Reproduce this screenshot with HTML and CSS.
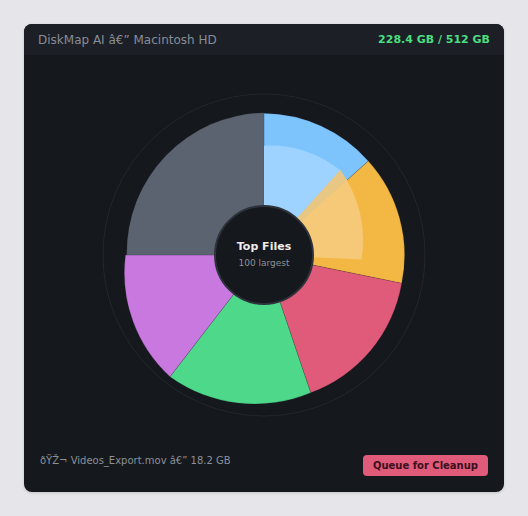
FILE: index.html
```html
<!DOCTYPE html>
<html>
<head>
<meta charset="utf-8">
<title>DiskMap AI</title>
<link rel="stylesheet" href="styles.css">
</head>
<body>
<div class="card">
  <header class="header">
    <span class="title">DiskMap AI â€” Macintosh HD</span>
    <span class="usage">228.4 GB / 512 GB</span>
  </header>
  <section class="chart">
    <svg class="sunburst" width="480" height="399" viewBox="24 55 480 399" xmlns="http://www.w3.org/2000/svg">
      <defs>
        <clipPath id="blueClip">
          <path d="M264,255 L264,113.3 A141 141 0 0 1 368.3,161 Z"/>
        </clipPath>
      </defs>
      <circle cx="264" cy="255" r="161" fill="none" stroke="#23272e" stroke-width="1"/>
      <g class="wedges">
        <path class="w-blue" d="M264,255 L264,113.3 A141 141 0 0 1 368.3,161 Z"/>
        <path class="w-yellow" d="M264,255 L368.3,161 A140 140 0 0 1 401.7,283.3 Z"/>
        <path class="w-red" d="M264,255 L401.7,283.3 A142 142 0 0 1 310.7,392.7 Z"/>
        <path class="w-green" d="M264,255 L310.7,392.7 A145 145 0 0 1 170,376.7 Z"/>
        <path class="w-purple" d="M264,255 L170,376.7 A141 141 0 0 1 125.5,255 Z"/>
        <path class="w-gray" d="M264,255 L126.7,255 A140 140 0 0 1 264,112.7 Z"/>
      </g>
      <path class="w-lblue" d="M264,255 L264,145.7 A112 112 0 0 1 340.3,170.3 Z"/>
      <path class="w-lyellow" d="M264,255 L340.3,170.3 A118 118 0 0 1 361.5,259.5 Z"/>
      <path class="w-tan" clip-path="url(#blueClip)" d="M264,255 L340.3,170.3 A118 118 0 0 1 361.5,259.5 Z"/>
      <circle class="hub" cx="264" cy="255" r="49"/>
      <text class="hub-title" x="264" y="250" text-anchor="middle">Top Files</text>
      <text class="hub-sub" x="264" y="265.5" text-anchor="middle">100 largest</text>
    </svg>
  </section>
  <footer class="footer">
    <span class="file">ðŸŽ¬ Videos_Export.mov â€” 18.2 GB</span>
    <button class="btn">Queue for Cleanup</button>
  </footer>
</div>
</body>
</html>
```
FILE: styles.css
```css
* { box-sizing: border-box; }
html, body { margin: 0; padding: 0; }
body {
  background: #e5e5ea;
  min-height: 100vh;
  display: flex;
  align-items: center;
  justify-content: center;
  font-family: "DejaVu Sans", Verdana, sans-serif;
}
.card {
  width: 480px;
  height: 468px;
  background: #15181c;
  border-radius: 8px;
  overflow: hidden;
  display: flex;
  flex-direction: column;
  box-shadow: 0 1px 3px rgba(0,0,0,0.15);
}
.header {
  height: 31px;
  flex: 0 0 31px;
  background: #1c1f26;
  padding: 0 14px;
  display: flex;
  align-items: center;
  justify-content: space-between;
}
.title {
  font-size: 12px;
  color: #878d97;
}
.usage {
  font-size: 11px;
  font-weight: bold;
  color: #4ade80;
}
.chart {
  flex: 0 0 399px;
  height: 399px;
}
.sunburst { display: block; }
.wedges path { stroke: #15181c; stroke-width: 0.15; }
.w-blue { fill: #7dc4fd; }
.w-yellow { fill: #f3b843; }
.w-red { fill: #e05a7a; }
.w-green { fill: #4ed88a; }
.w-purple { fill: #c878df; }
.w-gray { fill: #5b6270; }
.w-lblue { fill: #9dd3fe; }
.w-lyellow { fill: #f6c978; }
.w-tan { fill: #e8c784; }
.hub { fill: #15181c; stroke: #2e333b; stroke-width: 2; }
.hub-title {
  font-family: "DejaVu Sans", sans-serif;
  font-size: 11px;
  font-weight: bold;
  fill: #ececec;
}
.hub-sub {
  font-family: "DejaVu Sans", sans-serif;
  font-size: 9px;
  fill: #8b919a;
}
.footer {
  flex: 1 1 auto;
  padding: 0 16px 16px;
  display: flex;
  justify-content: space-between;
  align-items: flex-start;
}
.file {
  font-size: 10px;
  line-height: 14px;
  color: #8b919a;
}
.btn {
  margin-top: 1px;
  height: 21px;
  padding: 0 10px;
  border: none;
  border-radius: 4px;
  background: #e05a7a;
  color: #3a0f1c;
  font-family: "DejaVu Sans", sans-serif;
  font-size: 10px;
  font-weight: bold;
  line-height: 21px;
}
```
